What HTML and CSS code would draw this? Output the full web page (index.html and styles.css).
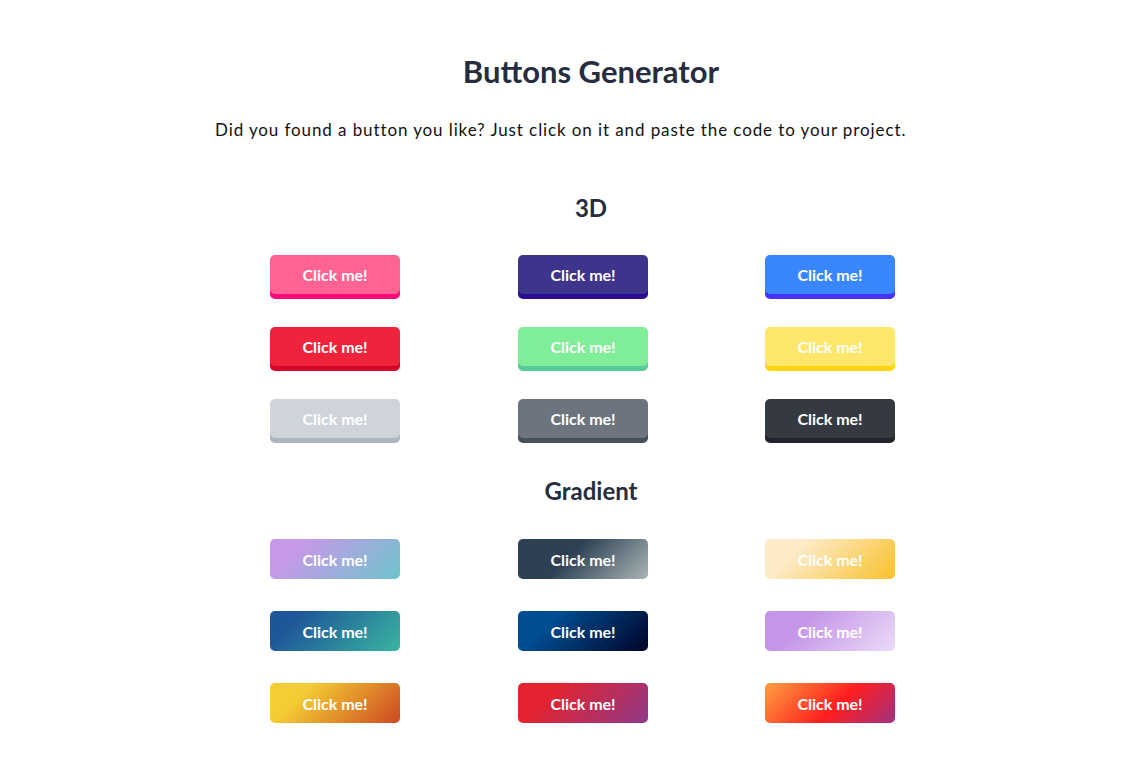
FILE: index.html
```html
<!DOCTYPE html>
<html lang="en">
<head>
<meta charset="utf-8">
<title>Buttons Generator</title>
<link rel="stylesheet" href="styles.css">
</head>
<body>
<main class="page">
  <h1 class="title">Buttons Generator</h1>
  <p class="lead">Did you found a button you like? Just click on it and paste the code to your project.</p>

  <section class="group">
    <h2 class="group-title">3D</h2>
    <div class="grid">
      <div class="cell"><button class="btn d3 pink">Click me!</button></div>
      <div class="cell"><button class="btn d3 indigo">Click me!</button></div>
      <div class="cell"><button class="btn d3 blue">Click me!</button></div>
      <div class="cell"><button class="btn d3 red">Click me!</button></div>
      <div class="cell"><button class="btn d3 green">Click me!</button></div>
      <div class="cell"><button class="btn d3 yellow">Click me!</button></div>
      <div class="cell"><button class="btn d3 light">Click me!</button></div>
      <div class="cell"><button class="btn d3 gray">Click me!</button></div>
      <div class="cell"><button class="btn d3 dark">Click me!</button></div>
    </div>
  </section>

  <section class="group">
    <h2 class="group-title">Gradient</h2>
    <div class="grid">
      <div class="cell"><button class="btn gr g1">Click me!</button></div>
      <div class="cell"><button class="btn gr g2">Click me!</button></div>
      <div class="cell"><button class="btn gr g3">Click me!</button></div>
      <div class="cell"><button class="btn gr g4">Click me!</button></div>
      <div class="cell"><button class="btn gr g5">Click me!</button></div>
      <div class="cell"><button class="btn gr g6">Click me!</button></div>
      <div class="cell"><button class="btn gr g7">Click me!</button></div>
      <div class="cell"><button class="btn gr g8">Click me!</button></div>
      <div class="cell"><button class="btn gr g9">Click me!</button></div>
    </div>
  </section>
</main>
</body>
</html>
```

FILE: styles.css
```css
* { box-sizing: border-box; }

body {
  margin: 0;
  background: #fff;
  font-family: Lato, "Noto Sans", sans-serif;
}

.page {
  width: 760px;
  margin-left: 211px;
  padding-top: 50px;
}

.title {
  margin: 0;
  text-align: center;
  font-size: 31px;
  line-height: 42px;
  font-weight: 700;
  color: #262d41;
}

.lead {
  margin: 26px 0 0 4px;
  font-size: 17px;
  line-height: 24px;
  letter-spacing: 0.9px;
  color: #111;
}

.group-title {
  margin: 0;
  text-align: center;
  font-size: 24px;
  line-height: 30px;
  font-weight: 700;
  color: #262d41;
}

.group:first-of-type { margin-top: 51px; }
.group + .group { margin-top: 38px; }

.grid {
  width: 742px;
  margin-top: 32px;
  display: grid;
  grid-template-columns: 248px 248px 246px;
  row-gap: 32px;
}

.group + .group .grid { margin-top: 33px; }

.cell {
  display: flex;
  justify-content: center;
}

.btn {
  width: 130px;
  height: 40px;
  border: 0;
  border-radius: 5px;
  color: #fff;
  font-family: inherit;
  font-size: 16px;
  font-weight: 700;
  cursor: pointer;
  padding: 0;
}

.d3 { box-shadow: 0 5px 0 0 var(--edge); height: 39px; }
.grid:has(.d3) { row-gap: 33px; }

.pink   { background: #ff6392; --edge: #ff0a78; }
.indigo { background: #3d348b; --edge: #2a0e8f; }
.blue   { background: #3a86ff; --edge: #4433ff; }
.red    { background: #ef233c; --edge: #d90429; }
.green  { background: #80ed99; --edge: #57cc99; }
.yellow { background: #ffe66d; --edge: #ffd60a; }
.light  { background: #ced4da; --edge: #adb5bd; }
.gray   { background: #6c757d; --edge: #495057; }
.dark   { background: #343a40; --edge: #212529; }

.g1 { background: linear-gradient(135deg, #c898e8 20%, #6dc5cc 100%); }
.g2 { background: linear-gradient(135deg, #2e4053 40%, #aab7b8 100%); }
.g3 { background: linear-gradient(135deg, #fdebc8 25%, #f8c12c 100%); }
.g4 { background: linear-gradient(135deg, #1e5799 20%, #3ab5a0 100%); }
.g5 { background: linear-gradient(135deg, #004e92 25%, #000428 100%); }
.g6 { background: linear-gradient(135deg, #c596e8 30%, #eadbf8 100%); }
.g7 { background: linear-gradient(135deg, #f4cc33 25%, #cc4822 100%); }
.g8 { background: linear-gradient(135deg, #e3232f 25%, #8e3a8a 100%); }
.g9 { background: linear-gradient(135deg, #ffa040 0%, #ff1f1f 55%, #a1307f 100%); }
```
